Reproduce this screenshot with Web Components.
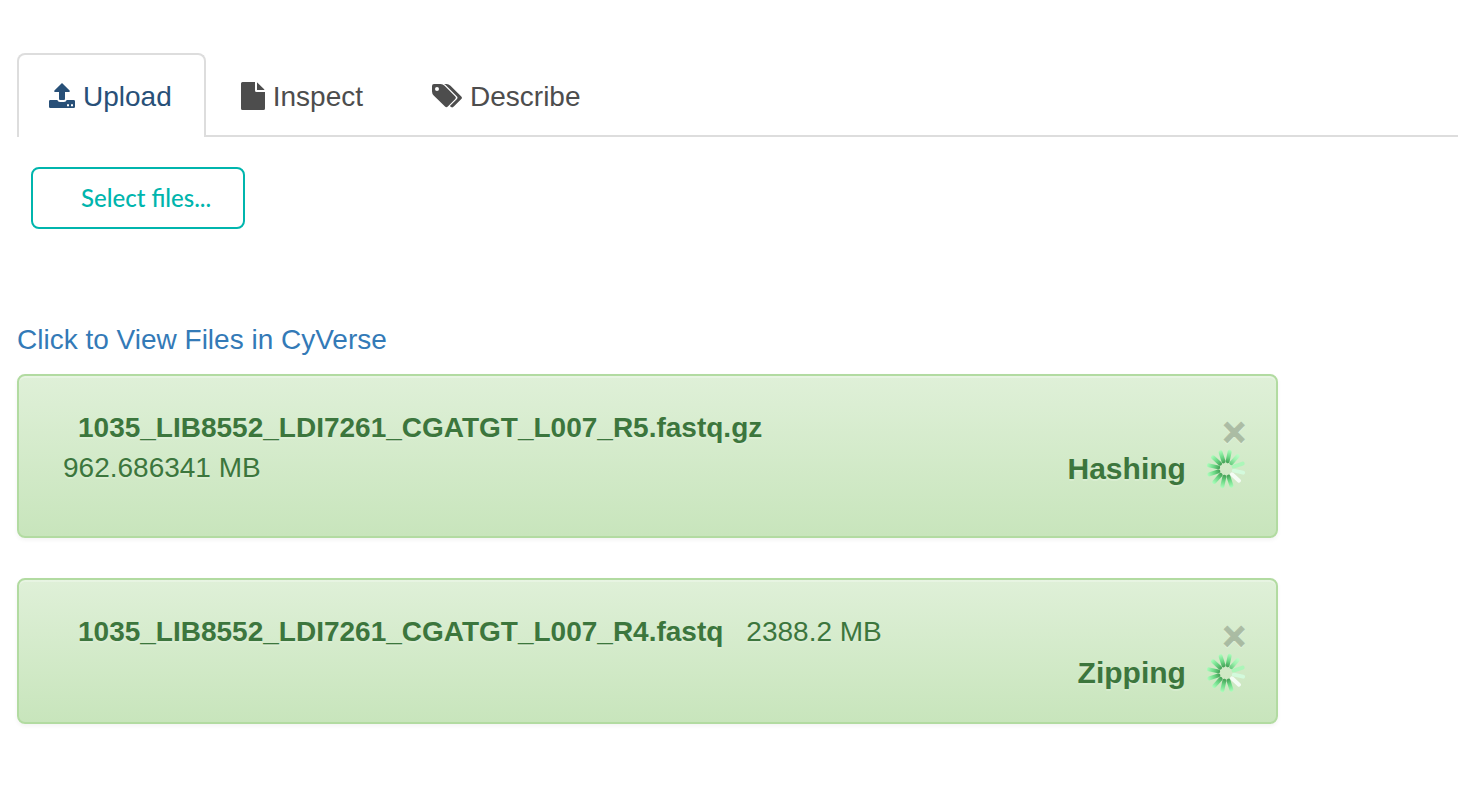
<!DOCTYPE html>
<html lang="en">
<head>
<meta charset="utf-8">
<title>Upload</title>
<style>
  body { margin: 0; background: #fff; font: 28px/40px "Liberation Sans", Arial, sans-serif; color: #333; }
</style>
</head>
<body>
<upload-page></upload-page>

<script>
function define(name, html, setup) {
  const template = document.createElement('template');
  template.innerHTML = html;
  customElements.define(name, class extends HTMLElement {
    constructor() {
      super();
      this.attachShadow({ mode: 'open' }).append(template.content.cloneNode(true));
    }
    connectedCallback() { if (setup) setup(this, this.shadowRoot); }
  });
}

const ICONS = {
  upload: { w: 26, h: 28, svg: '<path d="M13 0 20.600 7.600Q21.500 9 20 9H16V16Q16 17 15 17H11Q10 17 10 16V9H6Q4.500 9 5.400 7.600Z"/><path fill-rule="evenodd" d="M1.300 17H8.300Q9 19 11 19H15Q17 19 17.700 17H24.700Q26 17 26 18.300V23.700Q26 25 24.700 25H1.300Q0 25 0 23.700V18.300Q0 17 1.300 17ZM18 21.200V23.200H20V21.200ZM22 21.200V23.200H24V21.200Z"/>' },
  file: { w: 24, h: 30, svg: '<path d="M1.500 0H14V8.500Q14 10 15.500 10H24V26.500Q24 28 22.500 28H1.500Q0 28 0 26.500V1.500Q0 0 1.500 0Z"/><path d="M16 .5Q16.600 .8 17 1.200L22.900 7.100Q23.300 7.500 23.500 8H16Z"/>' },
  tags: { w: 30, h: 28, svg: '<path fill-rule="evenodd" d="M2 1H8.500Q10.800 1 12.600 2.700L23.300 13.400Q24.600 14.700 23.300 16L15.800 23.600Q14.400 25 13 23.600L1.700 12.400Q0 10.700 0 8.500V3Q0 1 2 1ZM5 4A2 2 0 1 0 5 8A2 2 0 1 0 5 4Z"/><path d="M12 1H14.500Q16.700 1 18.500 2.700L29.300 13.400Q30.600 14.700 29.300 16L21.800 23.600Q20.500 25 19 24L17.900 22.900L25 15.900Q26 14.700 25 13.500L14.600 2.900Q13.400 1.500 12 1Z"/>' }
};

define('glyph-icon', `
  <style>
    :host { display: block; flex: none; }
    svg { display: block; fill: currentColor; }
  </style>
`, (host, root) => {
  const icon = ICONS[host.getAttribute('name')];
  root.innerHTML += `<svg aria-hidden="true" width="${icon.w}" height="${icon.h}" viewBox="0 0 ${icon.w} ${icon.h}">${icon.svg}</svg>`;
});

define('tab-item', `
  <style>
    :host { display: block; }
    button {
      display: flex; align-items: center; gap: 8px;
      box-sizing: border-box; height: 84px; padding: 4px 32px 2px 30px;
      border: 2px solid transparent; border-bottom: 0; border-radius: 8px 8px 0 0;
      background: none; font: inherit; color: #4d4d4d; cursor: pointer;
    }
    :host([active]) button { background: #fff; border-color: #ddd; color: #285078; }
  </style>
  <button type="button" role="tab"><slot name="icon"></slot><slot></slot></button>
`, (host, root) => root.querySelector('button').setAttribute('aria-selected', host.hasAttribute('active')));

define('tab-bar', `
  <style>
    :host { display: flex; gap: 3px; box-shadow: inset 0 -2px #ddd; }
  </style>
  <slot></slot>
`, host => host.setAttribute('role', 'tablist'));

define('outline-button', `
  <style>
    :host { display: block; }
    button {
      box-sizing: border-box; height: 62px; padding: 0 32px 0 48px;
      border: 2px solid #00b5ad; border-radius: 8px; background: #fff;
      color: #00b5ad; font: 500 24px/32px Lato, sans-serif; cursor: pointer;
    }
  </style>
  <button type="button"><slot></slot></button>
`);

define('progress-spinner', `
  <style>
    :host { display: block; width: 40px; height: 40px; }
    svg { display: block; }
  </style>
  <svg width="40" height="40" viewBox="-20 -20 40 40" role="img" aria-label="In progress">
    <defs>
      <linearGradient id="spoke" gradientUnits="userSpaceOnUse" x1="0" y1="-7" x2="0" y2="-19">
        <stop offset="0" stop-color="#3a9f50"/><stop offset=".45" stop-color="#62d880"/><stop offset="1" stop-color="#a4ffb8"/>
      </linearGradient>
      <linearGradient id="light" gradientUnits="userSpaceOnUse" x1="0" y1="-7" x2="0" y2="-19">
        <stop offset="0" stop-color="#62cc7c"/><stop offset=".5" stop-color="#98f4ac"/><stop offset="1" stop-color="#b8ffc6"/>
      </linearGradient>
    </defs>
    <g stroke-width="4" stroke-linecap="round"></g>
  </svg>
`, (host, root) => {
  const strokes = ['url(#spoke)', 'url(#light)', '#a8f8b8', '#d4fcdf', '#f8fffa'];
  let spokes = '';
  for (let i = 0; i < 12; i++) {
    const angle = 12 + 30 * i;
    spokes += `<path d="M0-8 .01-17.500" stroke="${strokes[i] || strokes[0]}" opacity=".9" transform="rotate(${angle})"/>`;
  }
  root.querySelector('g').innerHTML = spokes;
});

define('file-card', `
  <style>
    :host {
      display: grid; grid-template-columns: 3fr 1fr;
      padding: 32px 30px 28px 44px; border: 2px solid #b2dba1; border-radius: 8px;
      background: linear-gradient(#dff0d8, #c8e5bc); color: #3c763d;
      text-shadow: 0 2px 0 rgba(255, 255, 255, .2);
      box-shadow: inset 0 2px 0 rgba(255, 255, 255, .25), 0 2px 4px rgba(0, 0, 0, .05);
    }
    .info { display: flex; flex-wrap: wrap; column-gap: 8px; align-content: start; margin-bottom: 20px; }
    .name { padding: 0 15px; font-weight: bold; }
    .state { display: flex; flex-direction: column; align-items: flex-end; }
    .close {
      box-sizing: border-box; height: 40px; padding: 8px 0 0; border: 0; background: none; color: #000; opacity: .2;
      font: bold 40px/32px "Liberation Sans", Arial, sans-serif; -webkit-text-stroke: 1px #000;
      text-shadow: 0 2px 0 #fff; cursor: pointer;
    }
    .status { display: flex; align-items: center; gap: 20px; height: 42px; font-size: 30px; font-weight: bold; }
  </style>
  <div class="info"><span class="name"><slot name="name"></slot></span><span><slot name="size"></slot></span></div>
  <div class="state">
    <button class="close" type="button" aria-label="Remove file">×</button>
    <div class="status"><slot></slot><progress-spinner></progress-spinner></div>
  </div>
`);

define('upload-page', `
  <style>
    :host { display: block; padding: 53px 0 40px 17px; }
    outline-button { margin: 30px 0 0 14px; }
    a { display: inline-block; margin: 91px 0 14px; color: #337ab7; text-decoration: none; }
    .files { display: grid; gap: 40px; width: 87.5%; }
  </style>
  <tab-bar>
    <tab-item active><glyph-icon slot="icon" name="upload"></glyph-icon>Upload</tab-item>
    <tab-item><glyph-icon slot="icon" name="file"></glyph-icon>Inspect</tab-item>
    <tab-item><glyph-icon slot="icon" name="tags"></glyph-icon>Describe</tab-item>
  </tab-bar>
  <outline-button>Select files...</outline-button>
  <a href="#files">Click to View Files in CyVerse</a>
  <div class="files" id="files">
    <file-card>
      <span slot="name">1035_LIB8552_LDI7261_CGATGT_L007_R5.fastq.gz</span>
      <span slot="size">962.686341 MB</span>Hashing
    </file-card>
    <file-card>
      <span slot="name">1035_LIB8552_LDI7261_CGATGT_L007_R4.fastq</span>
      <span slot="size">2388.2 MB</span>Zipping
    </file-card>
  </div>
`);
</script>
</body>
</html>
